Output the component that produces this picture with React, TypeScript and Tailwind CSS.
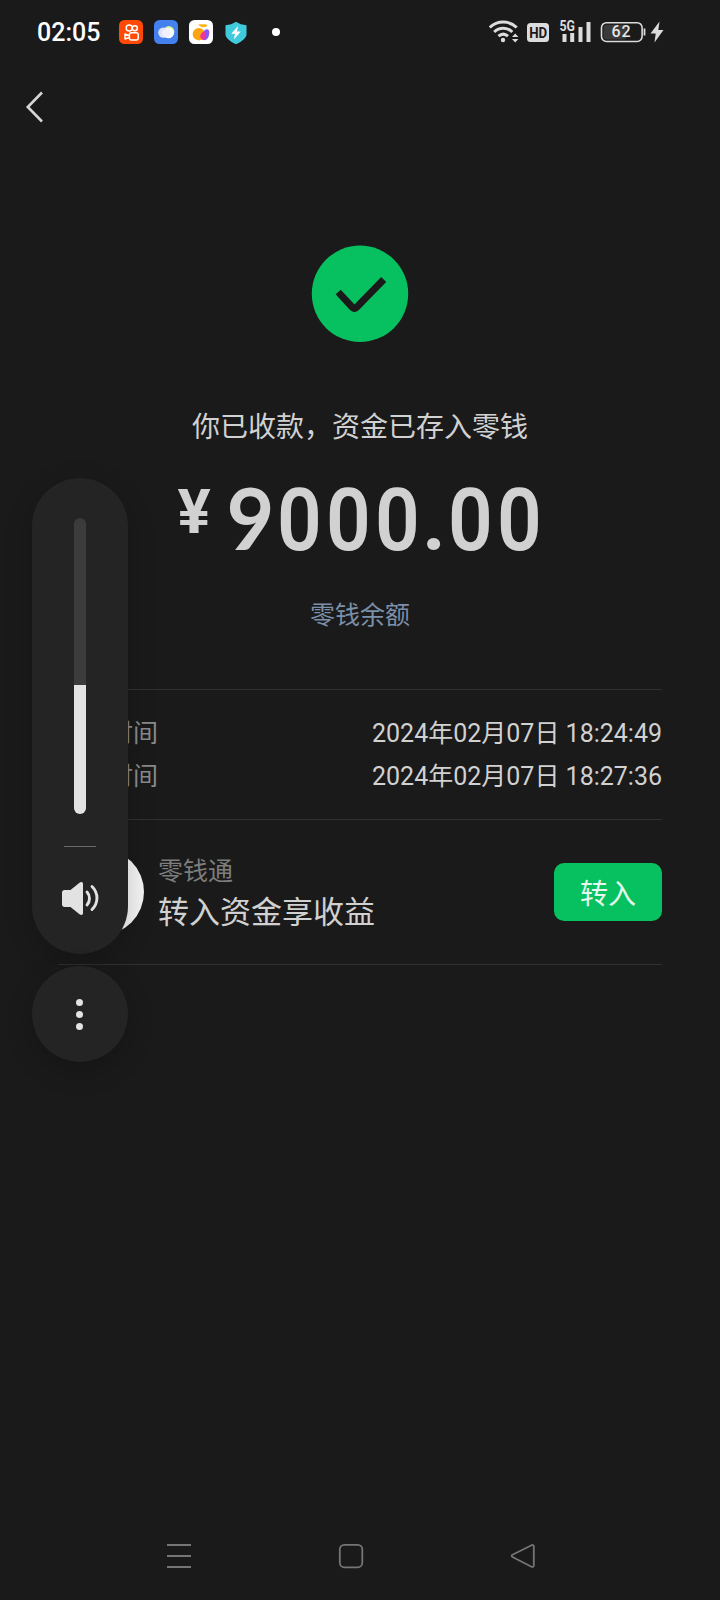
import React from 'react';

const records = [
  { label: '转账时间', value: '2024年02月07日 18:24:49' },
  { label: '收款时间', value: '2024年02月07日 18:27:36' },
];

const amount = '9000.00';
const volume = 43.6;

function AppIcons() {
  return (
    <div className="flex items-center gap-[11px]">
      <svg width="24" height="24" viewBox="0 0 24 24" fill="none">
        <rect width="24" height="24" rx="5.5" fill="#ff4906" />
        <g stroke="#fff" strokeWidth="1.5">
          <circle cx="10.2" cy="7.9" r="3" />
          <circle cx="15.8" cy="8.2" r="2.5" />
          <rect x="10.4" y="12.8" width="8.8" height="7.2" rx="2" />
          <path d="M10.4 15.6 6 14v5l4.4-1.5" strokeLinejoin="round" />
        </g>
      </svg>
      <svg width="24" height="24" viewBox="0 0 24 24">
        <rect width="24" height="24" rx="5.5" fill="#4580ef" />
        <circle cx="14.8" cy="11.6" r="5.6" fill="#d6f29a" />
        <circle cx="14.6" cy="13" r="5.2" fill="#fff" />
        <circle cx="9.4" cy="12.6" r="5.2" fill="#dfe3fd" />
        <circle cx="12.4" cy="13.2" r="4.2" fill="#f0f3ff" />
      </svg>
      <svg width="24" height="24" viewBox="0 0 24 24">
        <rect width="24" height="24" rx="5.5" fill="#fff" />
        <path d="M9.5 4.2h7c1.8 0 2.2 1.8.6 2.6-2.2 1-6.4.6-7.6-2.6Z" fill="#fcb514" />
        <circle cx="9.9" cy="14.2" r="6.2" fill="#fda50f" />
        <path d="M14.5 12.5c1-4 6-4.500 5.800-.2-.1 4.300-1.600 7.900-4.900 7.900-4-.5-3-5.200-.9-7.700Z" fill="#8a55f2" />
        <path d="M15 11.500c-4.500 1.500-5 7-1 8.500 3.500-1 4-6 1-8.500Z" fill="#f0359a" />
      </svg>
      <svg width="24" height="24" viewBox="0 0 24 24">
        <path d="M12 1.8c3 2 6.500 3.200 10.500 3.500v9c0 4-5 7.500-10.500 10C6.500 21.800 1.500 18.300 1.500 14.300v-9C5.500 5 9 3.800 12 1.800Z" fill="#40cbdc" />
        <path d="M14 6 7.300 13.700h3.600L10 19.500l6.700-8h-3.700Z" fill="#fff" />
      </svg>
    </div>
  );
}

function StatusIcons() {
  return (
    <svg width="176" height="32" viewBox="0 -4 176 32" fill="none">
      {/* wifi */}
      <g stroke="#dcdcdc" strokeWidth="3">
        <path d="M.8 7.500c7.300-7.200 19.600-7.200 26.900 0" />
        <path d="M5.200 12c5.200-5 12.900-5 18.100 0" />
        <path d="M9.500 16.200c3-2.700 6.500-2.700 9.500 0" />
      </g>
      <circle cx="14" cy="20" r="2.2" fill="#dcdcdc" />
      <path d="m23 17 3.200-3.500 3.200 3.500Zm0 2 3.200 3.500 3.200-3.500Z" fill="#dcdcdc" />
      {/* HD */}
      <rect x="38" y="3" width="22" height="19" rx="3.5" fill="#dcdcdc" />
      <text x="49.2" y="17.9" textAnchor="middle" fontFamily="Roboto" fontSize="15.5" fontWeight="700" textLength="18" lengthAdjust="spacingAndGlyphs" fill="#1a1a1a">HD</text>
      {/* signal */}
      <text x="70.5" y="11" fontFamily="Roboto" fontSize="14" fontWeight="700" textLength="15.5" lengthAdjust="spacingAndGlyphs" fill="#dcdcdc">5G</text>
      <path d="M73.500 14h4v8h-4ZM81.200 13h4v9h-4ZM89.500 7h4v15h-4ZM97.500 2h4v20h-4Z" fill="#dcdcdc" />
      {/* battery */}
      <rect x="112.5" y="2.7" width="40.6" height="18.8" rx="5" stroke="#dcdcdc" strokeWidth="1.6" />
      <rect x="114.5" y="4.7" width="23" height="14.8" rx="3" fill="#3a3a3a" />
      <path d="M155.500 8.500v7" stroke="#dcdcdc" strokeWidth="1.8" />
      <text x="132.5" y="17.3" textAnchor="middle" fontFamily="Roboto" fontSize="16" fontWeight="500" letterSpacing=".8" fill="#e6e6e6">62</text>
      <path d="M170.500 1.500 161.500 13.500h5.200L165.500 22.500l9-12.500h-5.200Z" fill="#dcdcdc" />
    </svg>
  );
}

function Amount() {
  return (
    <div className="flex h-[88px] items-start leading-[88px]">
      <span className="mr-[15px] ml-px w-[34px] text-center text-[62px] font-bold leading-[71px]">¥</span>
      {amount.split('').map((char, index) => {
        if (char === '.') {
          return <span key={index} className="flex w-[24px] justify-center text-[88px] font-semibold">.</span>;
        }
        // Lato has the straight-tailed 9
        if (char === '9') {
          return <span key={index} className="flex w-[49px] scale-x-[0.95] justify-center font-[Lato] text-[87px] font-bold leading-[82px]">9</span>;
        }
        return <span key={index} className="flex w-[49px] scale-x-[0.89] justify-center text-[88px] font-semibold">{char}</span>;
      })}
    </div>
  );
}

function VolumePanel() {
  return (
    <div className="absolute left-8 top-[478px] flex flex-col gap-3">
      <div className="flex h-[476px] w-24 flex-col items-center rounded-full bg-[#242424] pt-10 shadow-[0_8px_28px_rgba(0,0,0,0.2)]">
        <div className="flex h-[296px] w-3 flex-col justify-end overflow-hidden rounded-full bg-[#3b3b3b]">
          <div className="bg-[#e3e3e3]" style={{ height: `${volume}%` }} />
        </div>
        <div className="mt-8 h-px w-8 bg-[#6a6a6a]" />
        <svg className="mt-[33px]" width="38" height="36" viewBox="0 0 38 36" fill="none">
          <path d="M3.500 10H9.500L18.500 2.800c1.600-1.300 3.500-.8 3.500 1v29.400c0 1.700-1.900 2.400-3.500 1L9.500 27H3.500C2.200 27 1 26 1 24.500v-12C1 11 2.200 10 3.500 10Z" fill="#e2e2e2" />
          <path d="M26 12c3.300 3.600 3.300 9.400 0 13M31 6.500c6.600 6.500 6.600 16.500 0 23" stroke="#e2e2e2" strokeWidth="2.9" strokeLinecap="round" />
        </svg>
      </div>
      <div className="flex h-24 w-24 flex-col items-center justify-center gap-[5px] rounded-full bg-[#242424] pr-px shadow-[0_8px_28px_rgba(0,0,0,0.2)]">
        <span className="h-[7px] w-[7px] rounded-full bg-[#e3e3e3]" />
        <span className="h-[7px] w-[7px] rounded-full bg-[#e3e3e3]" />
        <span className="h-[7px] w-[7px] rounded-full bg-[#e3e3e3]" />
      </div>
    </div>
  );
}

export default function App(): React.ReactNode {
  return (
    <div className="relative flex h-[1600px] w-[720px] flex-col overflow-hidden bg-[#1a1a1a] font-[Roboto,'Noto_Sans_CJK_SC',sans-serif] text-[#d1d1d1]">
      <div className="flex h-16 items-center pl-[37px] pr-[55px]">
        <span className="w-[82px] pt-px text-[25px] font-medium leading-none text-white">02:05</span>
        <AppIcons />
        <span className="ml-[24px] h-2 w-2 rounded-full bg-white" />
        <span className="flex-1" />
        <StatusIcons />
      </div>

      <div className="flex h-[86px] items-center pl-[25px]">
        <svg width="20" height="34" viewBox="0 0 20 34" fill="none">
          <path d="M17 2.500 2.800 17l14.200 14.500" stroke="#d6d6d6" strokeWidth="2.6" />
        </svg>
      </div>

      <div className="flex flex-col items-center pt-[95px]">
        <svg width="98" height="98" viewBox="0 0 98 98" fill="none">
          <circle cx="49" cy="48.8" r="48.2" fill="#07c160" />
          <path d="m27.200 47 14 15.200c1.600 1.500 2.900 1.500 4.500 0L72.700 34.500" stroke="#1a1a1a" strokeWidth="7" />
        </svg>
        <p className="mt-[65px] text-[28px] leading-10">你已收款，资金已存入零钱</p>
        <div className="mt-[28px]">
          <Amount />
        </div>
        <a className="mt-[34px] text-[25px] leading-9 text-[#7d90a9]">零钱余额</a>
      </div>

      <div className="mx-[58px] mt-[55px] border-y border-[#303030] pb-[21px] pt-[22px] text-[25px] leading-[43px]">
        {records.map(item => (
          <div key={item.label} className="flex justify-between">
            <span className="text-[#8a8a8a]">{item.label}</span>
            <span>{item.value}</span>
          </div>
        ))}
      </div>

      <div className="mx-[58px] flex h-[145px] items-center border-b border-[#303030]">
        <div className="h-[86px] w-[86px] rounded-full bg-[#f5f5f5]" />
        <div className="ml-[14px] flex-1 pt-[2px]">
          <p className="text-[25px] leading-10 text-[#7d7d7d]">零钱通</p>
          <p className="text-[31px] leading-[42px]">转入资金享收益</p>
        </div>
        <button className="h-[58px] w-[108px] rounded-[10px] bg-[#07c160] pt-[5px] text-[28px] text-[#e6f9ef]">转入</button>
      </div>

      <div className="mt-auto flex h-[88px] items-center pl-[166px]">
        <svg width="26" height="26" viewBox="0 0 26 26" fill="none" stroke="#757575" strokeWidth="2">
          <path d="M1 2h24M1 13h24M1 24h24" />
        </svg>
        <svg className="ml-[146px]" width="26" height="26" viewBox="0 0 26 26" fill="none" stroke="#757575" strokeWidth="1.8">
          <rect x="1.8" y="1.8" width="22.5" height="22.5" rx="4.5" />
        </svg>
        <svg className="ml-[146px]" width="26" height="26" viewBox="0 0 26 26" fill="none" stroke="#757575" strokeWidth="1.8">
          <path d="M2.500 11.800 21.500 2.200c1.300-.5 2.300 0 2.300 1.400v18.800c0 1.400-1 1.900-2.300 1.300L2.500 14c-1.200-.7-1.200-1.600 0-2.200Z" />
        </svg>
      </div>

      <VolumePanel />
    </div>
  );
}
